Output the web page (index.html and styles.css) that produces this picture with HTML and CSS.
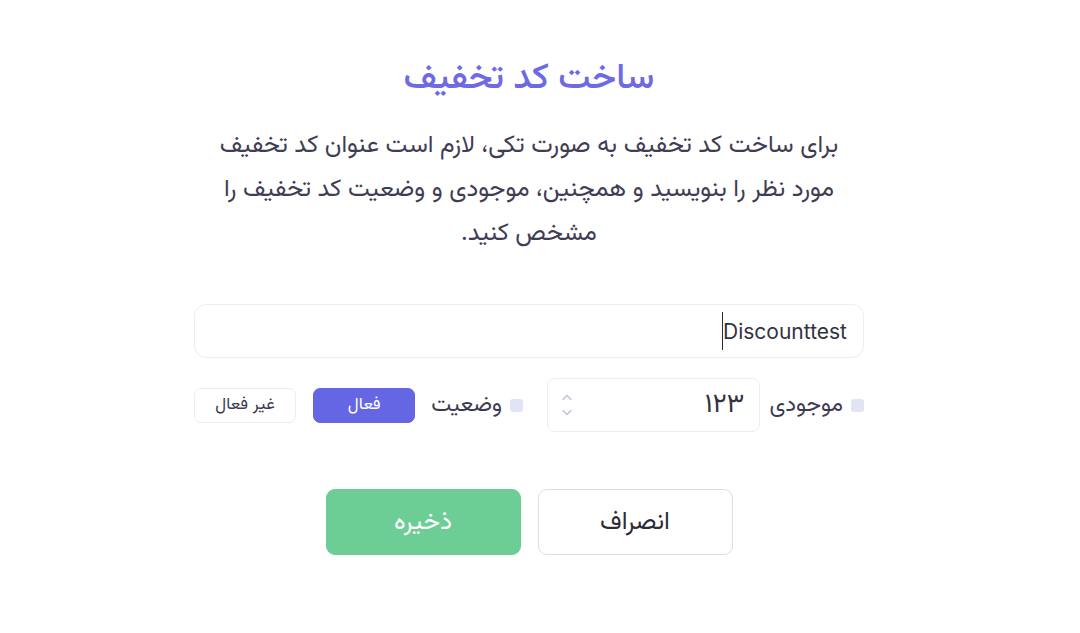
FILE: index.html
```html
<!DOCTYPE html>
<html lang="fa" dir="rtl">
<head>
<meta charset="utf-8">
<title>ساخت کد تخفیف</title>
<link rel="stylesheet" href="styles.css">
</head>
<body>
<main class="modal">
  <h1 class="title">ساخت کد تخفیف</h1>
  <p class="desc">برای ساخت کد تخفیف به صورت تکی، لازم است عنوان کد تخفیف مورد نظر را بنویسید و همچنین، موجودی و وضعیت کد تخفیف را مشخص کنید.</p>
  <div class="field">
    <span class="field-text">Discounttest</span><span class="caret"></span>
  </div>
  <div class="row">
    <span class="dot"></span>
    <span class="label">موجودی</span>
    <div class="number">
      <span class="num-text">۱۲۳</span>
      <svg class="spin" width="14" height="26" viewBox="0 0 14 26"><path d="M3 7.5 L7 3.5 L11 7.5" fill="none" stroke="#c3c7de" stroke-width="1.6" stroke-linecap="round" stroke-linejoin="round"/><path d="M3 18.5 L7 22.5 L11 18.5" fill="none" stroke="#c3c7de" stroke-width="1.6" stroke-linecap="round" stroke-linejoin="round"/></svg>
    </div>
    <span class="dot dot-2"></span>
    <span class="label">وضعیت</span>
    <button class="toggle toggle-on">فعال</button>
    <button class="toggle">غیر فعال</button>
  </div>
  <div class="actions">
    <button class="btn btn-cancel">انصراف</button>
    <button class="btn btn-save">ذخیره</button>
  </div>
</main>
</body>
</html>
```
FILE: styles.css
```css
* { box-sizing: border-box; }
html, body { margin: 0; padding: 0; background: #ffffff; }
body {
  font-family: "Vazirmatn", "Noto Sans Arabic", "DejaVu Sans", sans-serif;
  color: #3d3b52;
}
.modal {
  width: 670px;
  margin-right: 216px;
  margin-left: 194px;
  padding-top: 55px;
  display: flex;
  flex-direction: column;
  align-items: center;
}
.title {
  margin: 0;
  font-size: 36px;
  line-height: 48px;
  font-weight: 500;
  color: #6d6ae4;
}
.desc {
  margin: 21px 0 0;
  width: 660px;
  text-align: center;
  font-size: 24.5px;
  line-height: 44px;
  color: #3f3d55;
}
.field {
  margin-top: 48px;
  width: 670px;
  height: 54px;
  border: 1.5px solid #ededf2;
  border-radius: 12px;
  display: flex;
  align-items: center;
  padding: 0 16px;
}
.field-text {
  direction: ltr;
  font-family: "Inter", "DejaVu Sans", sans-serif;
  font-size: 21px;
  color: #34323f;
}
.caret {
  width: 1.5px;
  height: 38px;
  background: #2b2a33;
}
.row {
  margin-top: 20px;
  width: 670px;
  height: 54px;
  display: flex;
  align-items: center;
}
.dot {
  width: 13px;
  height: 13px;
  border-radius: 3px;
  background: #e1e4f5;
  margin-left: 8px;
}
.dot-2 { margin-right: 24px; }
.label {
  font-size: 22.5px;
  color: #3d3b52;
  margin-left: 9px;
}
.number {
  width: 215px;
  height: 54px;
  border: 1.5px solid #ededf2;
  border-radius: 8px;
  display: flex;
  align-items: center;
  justify-content: space-between;
  padding: 0 15px 0 12px;
}
.num-text {
  font-size: 27px;
  color: #34323f;
}
.spin { display: block; }
.toggle {
  font-family: inherit;
  width: 103px;
  height: 35px;
  border-radius: 7px;
  border: 1.5px solid #ededf2;
  background: #fff;
  color: #3d3b52;
  font-size: 17px;
  padding: 0;
  margin-right: 17px;
}
.toggle-on {
  background: #6466e3;
  border-color: #6466e3;
  color: #ffffff;
  margin-right: 7px;
}
.actions {
  margin-top: 57px;
  display: flex;
  gap: 17px;
}
.btn {
  font-family: inherit;
  width: 195px;
  height: 66px;
  border-radius: 9px;
  font-size: 25px;
  padding: 0;
}
.btn-cancel {
  background: #fff;
  border: 1.5px solid #dcdcec;
  color: #2e2d36;
}
.btn-save {
  background: #6ccd95;
  border: 1.5px solid #6ccd95;
  color: #ffffff;
}
```
